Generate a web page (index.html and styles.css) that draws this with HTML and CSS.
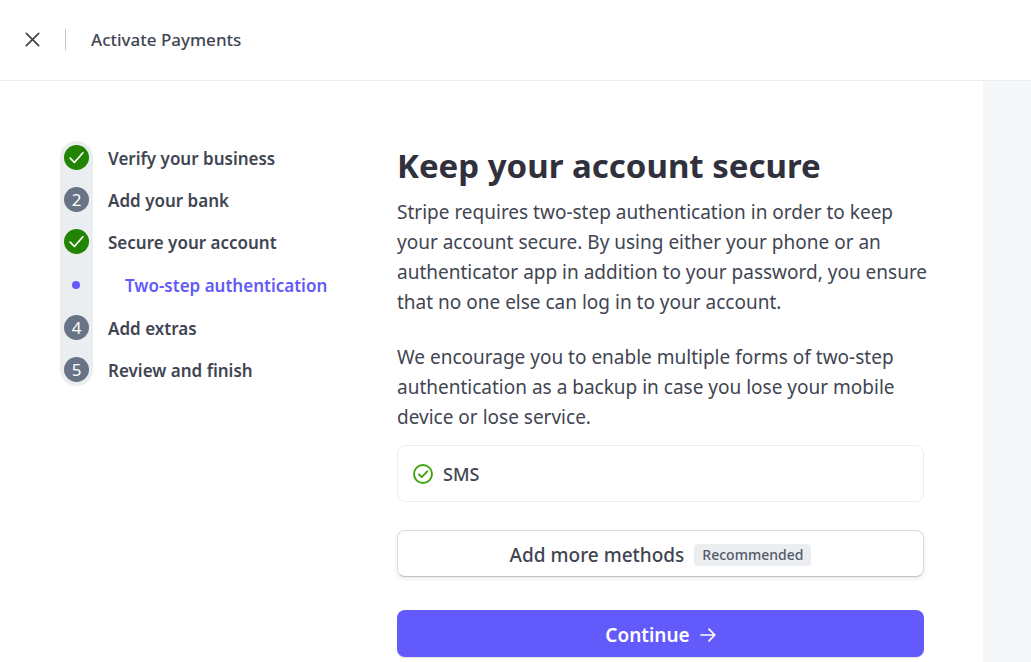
FILE: index.html
```html
<!DOCTYPE html>
<html lang="en">
<head>
    <meta charset="UTF-8">
    <meta name="viewport" content="width=device-width, initial-scale=1.0">
    <title>Activate Payments</title>
    <link rel="stylesheet" href="styles.css">
</head>
<body>
    <header class="topbar">
        <button type="button" class="close-button" aria-label="Close">
            <svg width="15" height="15" viewBox="0 0 15 15" fill="none" stroke="currentColor" stroke-width="1.7" stroke-linecap="round">
                <path d="M1.3 1.3l12.4 12.4M13.7 1.3L1.3 13.7"/>
            </svg>
        </button>
        <div class="topbar-title">Activate Payments</div>
    </header>

    <div class="page">
        <nav class="steps-nav" aria-label="Setup steps">
            <ol class="steps">
                <li class="step">
                    <span class="marker marker-done">
                        <svg width="25" height="25" viewBox="0 0 25 25" fill="none" stroke="currentColor" stroke-width="1.7" stroke-linecap="round" stroke-linejoin="round">
                            <path d="M6.2 13.2l4.2 4.3 8.5-9.7"/>
                        </svg>
                    </span>
                    <a href="#" class="step-link">Verify your business</a>
                </li>
                <li class="step">
                    <span class="marker">2</span>
                    <a href="#" class="step-link">Add your bank</a>
                </li>
                <li class="step">
                    <span class="marker marker-done">
                        <svg width="25" height="25" viewBox="0 0 25 25" fill="none" stroke="currentColor" stroke-width="1.7" stroke-linecap="round" stroke-linejoin="round">
                            <path d="M6.2 13.2l4.2 4.3 8.5-9.7"/>
                        </svg>
                    </span>
                    <a href="#" class="step-link">Secure your account</a>
                </li>
                <li class="step substep">
                    <span class="dot"></span>
                    <a href="#" class="step-link" aria-current="step">Two-step authentication</a>
                </li>
                <li class="step">
                    <span class="marker">4</span>
                    <a href="#" class="step-link">Add extras</a>
                </li>
                <li class="step">
                    <span class="marker">5</span>
                    <a href="#" class="step-link">Review and finish</a>
                </li>
            </ol>
        </nav>

        <main class="content">
            <h1>Keep your account secure</h1>
            <p>Stripe requires two-step authentication in order to keep your account secure. By using either your phone or an authenticator app in addition to your password, you ensure that no one else can log in to your account.</p>
            <p>We encourage you to enable multiple forms of two-step authentication as a backup in case you lose your mobile device or lose service.</p>

            <div class="method">
                <svg width="20" height="20" viewBox="0 0 20 20" fill="none" stroke="currentColor" stroke-width="1.9" stroke-linecap="round" stroke-linejoin="round">
                    <circle cx="10" cy="10" r="9"/>
                    <path d="M5.9 10.4l2.8 2.8 5.6-5.9"/>
                </svg>
                <span class="method-name">SMS</span>
            </div>

            <button type="button" class="button button-secondary">
                Add more methods
                <span class="badge">Recommended</span>
            </button>

            <button type="button" class="button button-primary">
                Continue
                <svg width="16" height="14" viewBox="0 0 16 14" fill="none" stroke="currentColor" stroke-width="1.7" stroke-linecap="round" stroke-linejoin="round">
                    <path d="M1 7h13.6M9 1.2L14.8 7 9 12.8"/>
                </svg>
            </button>
        </main>

        <aside class="side-panel"></aside>
    </div>
</body>
</html>
```
FILE: styles.css
```css
* {
    box-sizing: border-box;
}

body {
    font-family: "Segoe UI", "Noto Sans", sans-serif;
    margin: 0;
    background-color: #fff;
    color: #414552;
    display: flex;
    flex-direction: column;
    height: 100vh;
    overflow: hidden;
}

/* Top bar */
.topbar {
    display: flex;
    align-items: center;
    flex-shrink: 0;
    height: 81px;
    padding: 0 24px 2px;
    border-bottom: 1px solid #ebeef1;
}

.close-button {
    display: flex;
    padding: 1px;
    border: none;
    background: none;
    color: #414552;
    cursor: pointer;
}

.topbar-title {
    font-size: 17px;
    font-weight: 500;
    line-height: 21px;
    margin-left: 24px;
    padding-left: 25px;
    border-left: 1px solid #c0c8d2;
}

/* Page columns */
.page {
    display: grid;
    grid-template-columns: 337px 1fr 48px;
    flex-grow: 1;
    padding-left: 60px;
}

.steps-nav {
    padding-top: 60px;
}

/* Steps: the list is the grey track, the labels run out to its right */
.steps {
    display: flex;
    flex-direction: column;
    gap: 17px;
    width: 33px;
    margin: 0;
    padding: 4px;
    list-style: none;
    background-color: #ebeef1;
    border-radius: 17px;
}

.step {
    display: flex;
    align-items: center;
    gap: 19px;
    height: 25px;
    white-space: nowrap;
}

.marker {
    display: flex;
    align-items: center;
    justify-content: center;
    flex-shrink: 0;
    width: 25px;
    height: 25px;
    border-radius: 50%;
    background-color: #687385;
    color: #fff;
    font-size: 17px;
}

.marker-done {
    background-color: #228403;
}

.dot {
    flex-shrink: 0;
    width: 8px;
    height: 8px;
    margin: 0 8px;
    border-radius: 50%;
    background-color: #625afa;
}

.step-link {
    padding-top: 2px;
    color: #414552;
    font-size: 17px;
    font-weight: 600;
    text-decoration: none;
}

.substep {
    height: 27px;
    gap: 37px;
}

.substep .step-link {
    color: #625afa;
}

/* Content */
.content {
    padding: 64px 59px 0 0;
}

h1 {
    margin: 0 0 10px;
    color: #30313d;
    font-size: 33px;
    font-weight: 700;
    line-height: 42px;
}

p {
    margin: 0 -12px 25px 0;
    font-size: 19px;
    line-height: 30px;
}

.method {
    display: flex;
    align-items: center;
    gap: 10px;
    height: 57px;
    margin: -12px 0 28px;
    padding: 0 15px;
    border: 1px solid #ebeef1;
    border-radius: 8px;
    color: #3fa40d;
}

.method-name {
    color: #414552;
    font-size: 18px;
    font-weight: 500;
}

.button {
    display: flex;
    align-items: center;
    justify-content: center;
    gap: 10px;
    width: 100%;
    height: 47px;
    margin-bottom: 33px;
    padding: 2px 6px 0;
    border: none;
    border-radius: 8px;
    font-family: inherit;
    font-size: 19px;
    cursor: pointer;
}

.button-secondary {
    background-color: #fff;
    border: 1px solid #d5dbe1;
    border-bottom-color: #c0c4c8;
    box-shadow: 0 2px 4px rgba(0, 0, 0, 0.08);
    color: #414552;
    font-weight: 500;
}

.button-primary {
    background-color: #625afa;
    box-shadow: 0 1px 1px rgba(0, 0, 0, 0.12);
    color: #fff;
    font-weight: 600;
}

.badge {
    padding: 0 8px;
    border-radius: 4px;
    background-color: #ebeef1;
    color: #545969;
    font-size: 14px;
    line-height: 22px;
}

.side-panel {
    background-color: #f5f7f9;
}
```
